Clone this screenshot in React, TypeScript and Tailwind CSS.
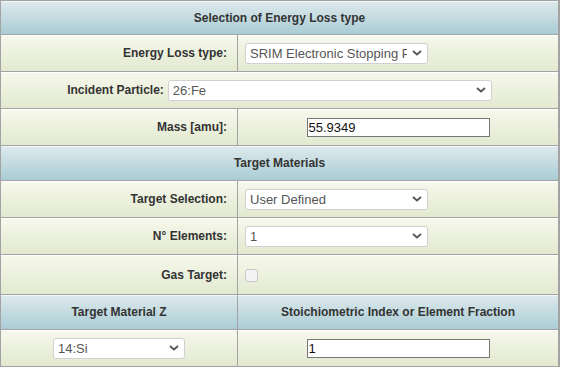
import React from "react";

const font = { fontFamily: '"Liberation Sans", Arial, sans-serif' };

function Chevron() {
  return (
    <svg
      width="10"
      height="6"
      viewBox="0 0 10 6"
      className="pointer-events-none absolute right-[6px] top-1/2 -translate-y-1/2"
    >
      <path d="M1 1l4 3.5L9 1" fill="none" stroke="#555" strokeWidth="1.8" />
    </svg>
  );
}

function Select({ value, className }: { value: string; className: string }) {
  return (
    <span className={"relative inline-block align-middle " + className}>
      <select
        defaultValue={value}
        className="h-[21px] w-full appearance-none overflow-hidden rounded-[3px] border border-[#d0d0d0] bg-white pl-[4px] pr-[20px] text-[13px] leading-[19px] text-[#555] outline-none"
        style={font}
      >
        <option>{value}</option>
      </select>
      <Chevron />
    </span>
  );
}

function TextBox({ value }: { value: string }) {
  return (
    <input
      defaultValue={value}
      className="h-[19px] w-[183px] border border-[#777] bg-white px-[1px] align-middle text-[13px] leading-[17px] text-[#111] outline-none"
      style={font}
    />
  );
}

const cell =
  "border border-[#a3a3a3] bg-linear-to-b from-[#f6f8ec] to-[#e2e9cf] shadow-[inset_0_1px_0_#ffffff]";
const head =
  "border border-[#a3a3a3] bg-linear-to-b from-[#dde9ec] to-[#a9ccd4] shadow-[inset_0_1px_0_#f2f8f9] text-center font-bold text-[12px] text-[#333]";
const label = "text-right font-bold text-[12px] text-[#333] pr-[10px]";

export default function App() {
  return (
    <div className="w-[561px] bg-white" style={font}>
      <table className="w-[560px] table-fixed border-collapse border-r-2 border-[#a3a3a3]">
        <colgroup>
          <col className="w-[237px]" />
          <col />
        </colgroup>
        <tbody>
          <tr className="h-[34px]">
            <td colSpan={2} className={head}>
              Selection of Energy Loss type
            </td>
          </tr>
          <tr className="h-[37px]">
            <td className={cell + " " + label}>Energy Loss type:</td>
            <td className={cell + " pl-[7px]"}>
              <Select value="SRIM Electronic Stopping Power" className="w-[183px]" />
            </td>
          </tr>
          <tr className="h-[37px]">
            <td colSpan={2} className={cell + " text-center"}>
              <span className="mr-[4px] align-middle text-[12px] font-bold text-[#333]">
                Incident Particle:
              </span>
              <Select value="26:Fe" className="w-[324px]" />
            </td>
          </tr>
          <tr className="h-[37px]">
            <td className={cell + " " + label}>Mass [amu]:</td>
            <td className={cell + " text-center"}>
              <TextBox value="55.9349" />
            </td>
          </tr>
          <tr className="h-[35px]">
            <td colSpan={2} className={head}>
              Target Materials
            </td>
          </tr>
          <tr className="h-[37px]">
            <td className={cell + " " + label}>Target Selection:</td>
            <td className={cell + " pl-[7px]"}>
              <Select value="User Defined" className="w-[183px]" />
            </td>
          </tr>
          <tr className="h-[37px]">
            <td className={cell + " " + label}>N° Elements:</td>
            <td className={cell + " pl-[7px]"}>
              <Select value="1" className="w-[183px]" />
            </td>
          </tr>
          <tr className="h-[40px]">
            <td className={cell + " " + label}>Gas Target:</td>
            <td className={cell + " pl-[7px]"}>
              <span className="inline-block h-[13px] w-[13px] rounded-[3px] border border-[#c8c8c8] bg-[#f4f4f4] align-middle" />
            </td>
          </tr>
          <tr className="h-[35px]">
            <td className={head}>Target Material Z</td>
            <td className={head}>Stoichiometric Index or Element Fraction</td>
          </tr>
          <tr className="h-[37px]">
            <td className={cell + " text-center"}>
              <Select value="14:Si" className="w-[132px]" />
            </td>
            <td className={cell + " text-center"}>
              <TextBox value="1" />
            </td>
          </tr>
        </tbody>
      </table>
    </div>
  );
}
